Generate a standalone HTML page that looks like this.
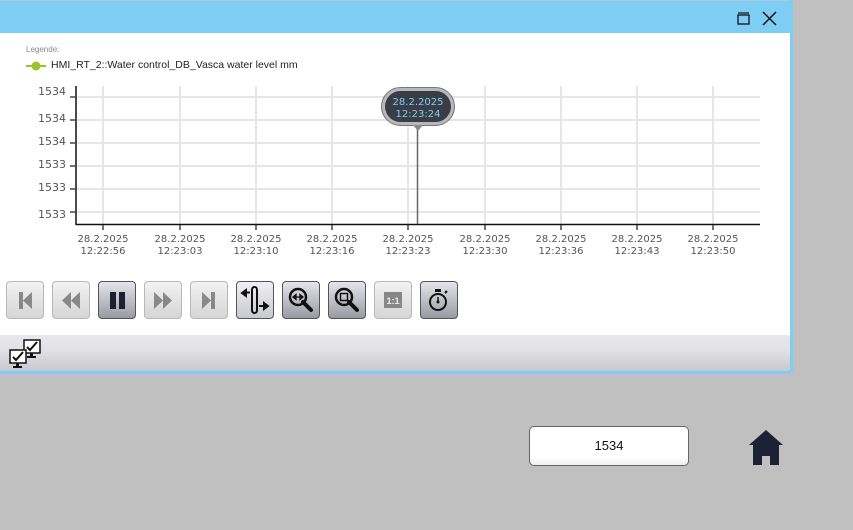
<!DOCTYPE html>
<html><head><meta charset="utf-8"><style>
body{margin:0;width:853px;height:530px;background:#c0c0c0;position:relative;overflow:hidden;font-family:"Liberation Sans","DejaVu Sans",sans-serif}
.win{position:absolute;left:0;top:0;width:790px;height:371px;border:0 solid #7ecdf5;border-right-width:3px;border-bottom-width:3px;border-radius:0 0 6px 0;background:#fff;overflow:hidden}
.title{position:absolute;left:0;top:0;width:790px;height:33px;background:#7ecdf5;border-top:1px solid #a9c9da;box-sizing:border-box}
.bottom{position:absolute;left:0;top:335px;width:790px;height:36px;background:linear-gradient(#e8e8ec,#e2e2e6 40%,#c9c9cd)}
.t{position:absolute;font-size:10px;color:#555;text-align:center;line-height:12px;font-family:"DejaVu Sans",sans-serif}
.btn{position:absolute;top:281px;width:38px;height:38px;border:1px solid #b8b8b8;border-radius:4px;box-sizing:border-box;background:linear-gradient(#f2f2f2,#d6d6d6)}
.btn.a{border-color:#555;background:linear-gradient(#e4e4ea,#9a9aa2)}
.btn svg{position:absolute;left:-1px;top:-1px}
</style></head><body>
<div class="win">
<div class="title">
<svg style="position:absolute;left:737px;top:11px" width="14" height="13"><rect x="1" y="3" width="11" height="9" fill="none" stroke="#111" stroke-width="1.3"/><line x1="1" y1="1" x2="12" y2="1" stroke="#111" stroke-width="1.2"/></svg>
<svg style="position:absolute;left:762px;top:10px" width="15" height="15"><path d="M1 1L14 14M14 1L1 14" stroke="#111" stroke-width="1.5"/></svg>
</div>
<div style="position:absolute;left:26px;top:45px;font-size:8px;color:#888">Legende:</div>
<svg style="position:absolute;left:26px;top:60px" width="20" height="12"><line x1="0" y1="6" x2="20" y2="6" stroke="#9ac22a" stroke-width="2"/><circle cx="10" cy="6" r="4.5" fill="#9ac22a"/></svg>
<div style="position:absolute;left:51px;top:59px;font-size:10.5px;color:#222">HMI_RT_2::Water control_DB_Vasca water level mm</div>
<svg style="position:absolute;left:0;top:0" width="790" height="260">
<g stroke="#e6e6e6" stroke-width="2">
<line x1="77" y1="97" x2="760" y2="97"/><line x1="77" y1="120" x2="760" y2="120"/><line x1="77" y1="143" x2="760" y2="143"/><line x1="77" y1="166" x2="760" y2="166"/><line x1="77" y1="189" x2="760" y2="189"/><line x1="77" y1="212" x2="760" y2="212"/>
<line x1="103" y1="86" x2="103" y2="224"/><line x1="180" y1="86" x2="180" y2="224"/><line x1="256" y1="86" x2="256" y2="224"/><line x1="332" y1="86" x2="332" y2="224"/><line x1="408" y1="86" x2="408" y2="224"/><line x1="485" y1="86" x2="485" y2="224"/><line x1="561" y1="86" x2="561" y2="224"/><line x1="637" y1="86" x2="637" y2="224"/><line x1="713" y1="86" x2="713" y2="224"/>
</g>
<line x1="76" y1="86" x2="76" y2="225" stroke="#111" stroke-width="1.5"/>
<line x1="76" y1="224.5" x2="760" y2="224.5" stroke="#111" stroke-width="1.5"/>
<g stroke="#444" stroke-width="1.5"><line x1="70" y1="97" x2="76" y2="97"/><line x1="70" y1="120" x2="76" y2="120"/><line x1="70" y1="143" x2="76" y2="143"/><line x1="70" y1="166" x2="76" y2="166"/><line x1="70" y1="189" x2="76" y2="189"/><line x1="70" y1="212" x2="76" y2="212"/>
<line x1="103" y1="225" x2="103" y2="230"/><line x1="180" y1="225" x2="180" y2="230"/><line x1="256" y1="225" x2="256" y2="230"/><line x1="332" y1="225" x2="332" y2="230"/><line x1="408" y1="225" x2="408" y2="230"/><line x1="485" y1="225" x2="485" y2="230"/><line x1="561" y1="225" x2="561" y2="230"/><line x1="637" y1="225" x2="637" y2="230"/><line x1="713" y1="225" x2="713" y2="230"/></g>
<line x1="417.5" y1="124" x2="417.5" y2="224" stroke="#666" stroke-width="1.5"/>
<rect x="381.5" y="87.5" width="73" height="38" rx="19" fill="#b8b8bc" stroke="#777"/>
<rect x="385" y="91" width="66" height="31" rx="15.5" fill="#3a3d44"/>
<path d="M413 125L418 131L423 125Z" fill="#888"/>
<text x="418" y="105" font-size="10" fill="#7ecdf5" text-anchor="middle" font-family="DejaVu Sans">28.2.2025</text>
<text x="418" y="117" font-size="10" fill="#7ecdf5" text-anchor="middle" font-family="DejaVu Sans">12:23:24</text>
</svg>
<div class="t" style="left:30px;top:86px;width:36px;text-align:right;font-size:11px">1534</div>
<div class="t" style="left:30px;top:113px;width:36px;text-align:right;font-size:11px">1534</div>
<div class="t" style="left:30px;top:136px;width:36px;text-align:right;font-size:11px">1534</div>
<div class="t" style="left:30px;top:159px;width:36px;text-align:right;font-size:11px">1533</div>
<div class="t" style="left:30px;top:182px;width:36px;text-align:right;font-size:11px">1533</div>
<div class="t" style="left:30px;top:209px;width:36px;text-align:right;font-size:11px">1533</div>
<div class="t" style="left:73px;top:234px;width:60px">28.2.2025<br>12:22:56</div>
<div class="t" style="left:150px;top:234px;width:60px">28.2.2025<br>12:23:03</div>
<div class="t" style="left:226px;top:234px;width:60px">28.2.2025<br>12:23:10</div>
<div class="t" style="left:302px;top:234px;width:60px">28.2.2025<br>12:23:16</div>
<div class="t" style="left:378px;top:234px;width:60px">28.2.2025<br>12:23:23</div>
<div class="t" style="left:455px;top:234px;width:60px">28.2.2025<br>12:23:30</div>
<div class="t" style="left:531px;top:234px;width:60px">28.2.2025<br>12:23:36</div>
<div class="t" style="left:607px;top:234px;width:60px">28.2.2025<br>12:23:43</div>
<div class="t" style="left:683px;top:234px;width:60px">28.2.2025<br>12:23:50</div>

<div class="btn" style="left:6px"><svg width="38" height="38"><rect x="13" y="11" width="4" height="17" fill="#888"/><path d="M26 11V28L17 19.5Z" fill="#888"/></svg></div>
<div class="btn" style="left:52px"><svg width="38" height="38"><path d="M19 11V28L10 19.5ZM28 11V28L19 19.5Z" fill="#888"/></svg></div>
<div class="btn a" style="left:98px"><svg width="38" height="38"><rect x="12" y="11" width="6" height="17" fill="#1d2033"/><rect x="21" y="11" width="6" height="17" fill="#1d2033"/></svg></div>
<div class="btn" style="left:144px"><svg width="38" height="38"><path d="M10 11V28L19 19.5ZM19 11V28L28 19.5Z" fill="#888"/></svg></div>
<div class="btn" style="left:190px"><svg width="38" height="38"><path d="M12 11V28L21 19.5Z" fill="#888"/><rect x="21" y="11" width="4" height="17" fill="#888"/></svg></div>
<div class="btn a" style="left:236px;background:linear-gradient(#f0f0f4,#c8c8d0)"><svg width="38" height="38"><rect x="16" y="6" width="5" height="26" rx="2.5" fill="none" stroke="#111" stroke-width="2"/><path d="M6 12L10 9V15ZM9 11.5H14" fill="#111" stroke="#111" stroke-width="2"/><path d="M32 25L28 22V28ZM23 25H29" fill="#111" stroke="#111" stroke-width="2"/></svg></div>
<div class="btn a" style="left:282px"><svg width="38" height="38"><circle cx="16" cy="16" r="8" fill="none" stroke="#111" stroke-width="2.5"/><path d="M21 21L29 29" stroke="#111" stroke-width="4" stroke-linecap="round"/><path d="M11 16H21M11 16L14 13.5V18.5ZM21 16L18 13.5V18.5Z" stroke="#111" stroke-width="1.3" fill="#111"/></svg></div>
<div class="btn a" style="left:328px"><svg width="38" height="38"><circle cx="16" cy="16" r="8" fill="none" stroke="#111" stroke-width="2.5"/><path d="M21 21L29 29" stroke="#111" stroke-width="4" stroke-linecap="round"/><rect x="12.5" y="12.5" width="7" height="7" fill="none" stroke="#111" stroke-width="1.5"/></svg></div>
<div class="btn" style="left:374px"><svg width="38" height="38"><rect x="10" y="11" width="18" height="16" fill="#888"/><text x="19" y="23" font-size="9" font-weight="bold" fill="#eee" text-anchor="middle">1:1</text></svg></div>
<div class="btn a" style="left:420px"><svg width="38" height="38"><circle cx="18" cy="21" r="8" fill="none" stroke="#111" stroke-width="2"/><rect x="15" y="8" width="6" height="3" fill="#111"/><path d="M18 21V16" stroke="#111" stroke-width="1.5"/><circle cx="18" cy="21" r="1.5" fill="#111"/><path d="M25 12L27 10" stroke="#111" stroke-width="2"/></svg></div>

<div class="bottom"><svg style="position:absolute;left:8px;top:2px" width="36" height="34"><rect x="16" y="3" width="16" height="13" fill="#fff" stroke="#111" stroke-width="1.5"/><path d="M19 10L22 13L29 5" stroke="#111" stroke-width="2" fill="none"/><rect x="22" y="16" width="3" height="3" fill="#111"/><rect x="19" y="19" width="9" height="2" fill="#111"/><rect x="2" y="13" width="16" height="13" fill="#fff" stroke="#111" stroke-width="1.5"/><path d="M5 20L8 23L15 15" stroke="#111" stroke-width="2" fill="none"/><rect x="8" y="26" width="3" height="3" fill="#111"/><rect x="5" y="29" width="9" height="2" fill="#111"/></svg></div>
</div>
<div style="position:absolute;left:529px;top:426px;width:158px;height:38px;border:1px solid #666;border-radius:5px;background:linear-gradient(#fff 80%,#eee);text-align:center;line-height:38px;font-size:13px;color:#111">1534</div>
<svg style="position:absolute;left:749px;top:429px" width="34" height="36"><path d="M0 16L17 1L34 16Z" fill="#1e2033"/><path d="M4 16H30V36H21V27H13V36H4Z" fill="#1e2033"/></svg>
</body></html>
